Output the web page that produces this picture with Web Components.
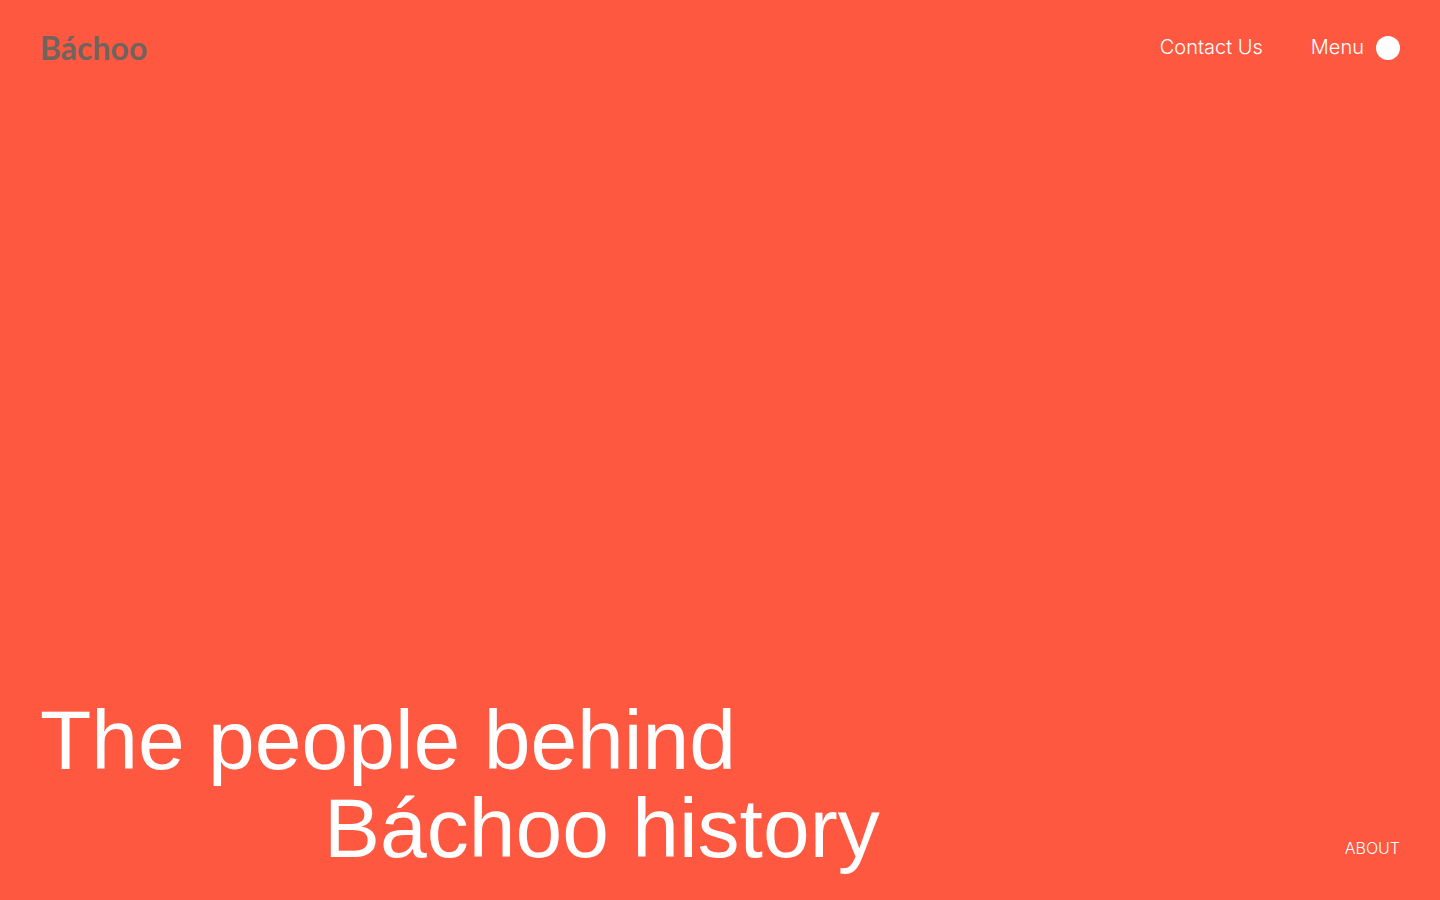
<!DOCTYPE html>
<html lang="en">
<head>
<meta charset="utf-8">
<meta name="viewport" content="width=device-width, initial-scale=1">
<title>Báchoo - About</title>
<style>
  body {
    margin: 0;
    background: #ff5841;
    color: #fff;
    font-family: Inter, "Liberation Sans", sans-serif;
  }
</style>
</head>
<body>
<about-page>
  <site-header slot="header">
    <a-logo>Báchoo</a-logo>
  </site-header>
  <page-hero label="ABOUT">
    <span slot="first">The people behind</span>
    <span slot="second">Báchoo history</span>
  </page-hero>
</about-page>

<script>
  function define(name, html) {
    const template = document.createElement('template');
    template.innerHTML = html;
    customElements.define(name, class extends HTMLElement {
      constructor() {
        super();
        this.attachShadow({ mode: 'open' }).appendChild(template.content.cloneNode(true));
      }

      connectedCallback() {
        const label = this.shadowRoot.querySelector('[data-label]');
        if (label) label.textContent = this.getAttribute('label');
      }
    });
  }

  // page shell
  define('about-page', `
    <style>
      :host {
        display: flex;
        flex-direction: column;
        justify-content: space-between;
        min-height: 100vh;
        padding: 0 40px;
        box-sizing: border-box;
      }
    </style>
    <slot name="header"></slot>
    <main><slot></slot></main>
  `);

  define('a-logo', `
    <style>
      :host { display: block; }
      a {
        color: #70645f;
        font: 700 32px/40px Lato, sans-serif;
        text-decoration: none;
      }
    </style>
    <a href="#"><slot></slot></a>
  `);

  define('site-header', `
    <style>
      :host {
        display: flex;
        justify-content: space-between;
        align-items: center;
        height: 96px;
      }
      nav {
        display: flex;
        align-items: center;
        gap: 48px;
      }
      a, button {
        color: inherit;
        font: 300 20px/24px Inter, sans-serif;
        text-decoration: none;
      }
      a, .text { padding-bottom: 2px; }
      button {
        display: flex;
        align-items: center;
        gap: 12px;
        padding: 0;
        border: 0;
        background: none;
        cursor: pointer;
      }
      .dot {
        width: 24px;
        height: 24px;
        border-radius: 50%;
        background: #fff;
      }
    </style>
    <slot></slot>
    <nav>
      <a href="#contact">Contact Us</a>
      <button type="button"><span class="text">Menu</span><span class="dot"></span></button>
    </nav>
  `);

  define('page-hero', `
    <style>
      :host {
        display: flex;
        justify-content: space-between;
        align-items: flex-end;
        padding-bottom: 28px;
      }
      h1 {
        margin: 0;
        font: 400 84px/88px "Liberation Sans", Arial, sans-serif;
      }
      h1 span { display: block; }
      .second { padding-left: 284px; }
      p {
        margin: 0;
        padding-bottom: 12px;
        font: 300 16px/24px Inter, sans-serif;
      }
    </style>
    <h1>
      <span><slot name="first"></slot></span>
      <span class="second"><slot name="second"></slot></span>
    </h1>
    <p data-label></p>
  `);
</script>
</body>
</html>
